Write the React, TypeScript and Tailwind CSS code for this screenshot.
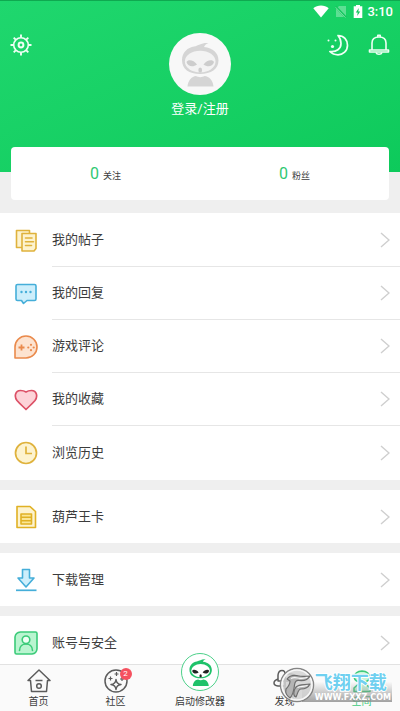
import type { ReactNode } from "react";

type MenuItem = {
  label: string;
  icon: ReactNode;
};

const groups: MenuItem[][] = [
  [
    { label: "我的帖子", icon: <PostsIcon /> },
    { label: "我的回复", icon: <ReplyIcon /> },
    { label: "游戏评论", icon: <GameIcon /> },
    { label: "我的收藏", icon: <HeartIcon /> },
    { label: "浏览历史", icon: <ClockIcon /> },
  ],
  [{ label: "葫芦王卡", icon: <CardIcon /> }],
  [{ label: "下载管理", icon: <DownloadIcon /> }],
  [{ label: "账号与安全", icon: <AccountIcon /> }],
];

const stats = [
  { label: "关注", value: 0 },
  { label: "粉丝", value: 0 },
];

export default function App() {
  return (
    <div className="flex h-dvh flex-col bg-[#efefef] font-['Roboto','Noto_Sans_CJK_SC',sans-serif] text-[#3c3c3c]">
      <main className="min-h-0 flex-1 overflow-y-auto [scrollbar-width:none]">
        <Header />

        <section className="relative mx-[11px] -mt-[25px] mb-[13px] grid h-[53px] grid-cols-2 items-center rounded-sm bg-white pt-0.5">
          {stats.map((stat) => (
            <a key={stat.label} href="#" className="flex items-baseline justify-center gap-1">
              <span className="text-base leading-5 text-[#2fc873]">{stat.value}</span>
              <span className="text-[9px] leading-5">{stat.label}</span>
            </a>
          ))}
        </section>

        <div className="flex flex-col gap-2.5">
          {groups.map((items) => (
            <ul key={items[0].label} className={items.length > 1 ? "bg-white py-px" : "bg-white"}>
              {items.map((item, i) => (
                <li key={item.label}>
                  <a href="#" className="flex h-[53px] items-stretch gap-3.5 pl-3.5">
                    <span className="flex items-center">{item.icon}</span>
                    <span
                      className={
                        i < items.length - 1
                          ? "flex flex-1 items-center justify-between border-b border-[#e6e6e6] pr-2.5"
                          : "flex flex-1 items-center justify-between pr-2.5"
                      }
                    >
                      <span className="text-[13px] leading-5">{item.label}</span>
                      <svg viewBox="0 0 10 16" className="h-4 w-2.5" fill="none" stroke="#cfcfcf" strokeWidth="1.4">
                        <path d="M1 1l8 7-8 7" />
                      </svg>
                    </span>
                  </a>
                </li>
              ))}
            </ul>
          ))}
        </div>
      </main>

      <TabBar />
    </div>
  );
}

function Header() {
  return (
    <header className="border-t border-[#0fa950] bg-linear-to-br from-[#1fd76e] to-[#0dca5b] pb-[53px] text-white">
      <div className="flex h-[21px] items-center justify-end gap-1.5 pr-[7px]">
        <svg viewBox="0 0 16 13" className="h-[13px] w-4" fill="#fff">
          <path d="M8 12.6L.3 3.2C4.500-.3 11.500-.3 15.700 3.200Z" />
        </svg>
        <svg viewBox="0 0 12 13" className="h-[13px] w-3">
          <path d="M4 1h7v11H1V4Z" fill="#fff" opacity=".3" />
          <path d="M.5 1.500l10.500 11" stroke="#13c75d" strokeWidth="2.200" />
          <path d="M.5 2.200l10 10.500" stroke="#fff" opacity=".4" />
        </svg>
        <div className="flex items-center gap-1">
          <svg viewBox="0 0 10 13" className="h-[13px] w-2.5">
            <path d="M3 0h4v1.300h2.300v11.700H.7V1.300H3Z" fill="#fff" />
            <path d="M5.800 3L2.800 7.500h1.900L4.200 11l3-4.500H5.300Z" fill="#13c75d" />
          </svg>
          <span className="text-[13px] leading-5 font-medium">3:10</span>
        </div>
      </div>

      <div className="grid grid-cols-[1fr_auto_1fr] items-start px-2.5 pt-[11px]">
        <button aria-label="设置" className="mt-px justify-self-start">
          <svg viewBox="0 0 22 22" className="size-[22px]" fill="none" stroke="#effff5" strokeWidth="1.600">
            <circle cx="11" cy="11" r="7.300" />
            <circle cx="11" cy="11" r="2.400" strokeWidth="2" />
            <path d="M11 .5v3M11 18.500v3M.5 11h3M18.500 11h3M3.700 3.700l2 2M16.300 16.300l2 2M3.700 18.300l2-2M16.300 5.700l2-2" strokeWidth="1.900" />
          </svg>
        </button>

        <button className="flex flex-col items-center gap-1">
          <span className="flex size-[62px] items-center justify-center rounded-full bg-[#f8f8f8]">
            <Mascot className="h-[47px] w-11" body="#d5d5d5" face="#f3f3f3" eyes="#cdcdcd" />
          </span>
          <span className="text-[13px] leading-5">登录/注册</span>
        </button>

        <div className="mt-px flex gap-[19px] justify-self-end">
          <button aria-label="夜间模式">
            <svg viewBox="0 0 22 22" className="size-[22px]" fill="none" stroke="#effff5" strokeWidth="1.700" strokeLinejoin="round">
              <path d="M11 1.500C17 1.500 20.500 6 20.500 11.200C20.500 17 16 20.800 11 20.800C8 20.800 5 19.800 2.800 17.500C9.500 18.500 14 14.500 14 9.500C14 6.500 13 3.800 11 1.500Z" />
              <g fill="#effff5" stroke="none">
                <circle cx="1.500" cy="6.500" r="1" />
                <circle cx="8.500" cy="6.500" r="1" />
                <circle cx="5.500" cy="12.500" r="1.600" />
              </g>
            </svg>
          </button>
          <button aria-label="消息">
            <svg viewBox="0 0 22 22" className="size-[22px]" fill="none" stroke="#effff5" strokeWidth="1.600" strokeLinejoin="round">
              <path d="M4 16V9C4 5 6.500 3 11 3s7 2 7 6v7" />
              <path d="M1.500 16h19v2h-19Z" />
              <path d="M8 18.500c.8 2.300 5.200 2.300 6 0M9.800 3V1.300h2.400V3" />
            </svg>
          </button>
        </div>
      </div>
    </header>
  );
}

function TabBar() {
  return (
    <nav className="relative flex h-[47px] border-t border-[#e2e2e2] bg-[#fafafa] text-[10px] leading-[18px]">
      <a href="#" className="flex flex-1 flex-col items-center pt-1">
        <HomeIcon />
        首页
      </a>
      <a href="#" className="flex flex-1 flex-col items-center pt-1">
        <span className="relative">
          <CommunityIcon />
          <span className="absolute -top-px -right-1 flex size-3 items-center justify-center rounded-full bg-[#f5515f] text-[8px] text-white">
            2
          </span>
        </span>
        社区
      </a>
      <a href="#" className="-mt-3 flex w-[92px] flex-col items-center gap-0.5">
        <span className="flex size-[38px] shrink-0 items-center justify-center rounded-full border border-[#4dd18a] bg-white">
          <Mascot className="h-[29px] w-[27px]" body="#1fc26a" face="#fff" eyes="#222" />
        </span>
        启动修改器
      </a>
      <a href="#" className="flex flex-1 flex-col items-center pt-1">
        <DiscoverIcon />
        发现
      </a>
      <a href="#" className="flex flex-1 flex-col items-center pt-1 text-[#3fcb7d]">
        <SpaceIcon />
        空间
      </a>
      <Watermark />
    </nav>
  );
}

function Watermark() {
  return (
    <div className="pointer-events-none absolute top-0.5 right-2 flex items-start font-['DejaVu_Sans','Noto_Sans_CJK_SC',sans-serif] font-bold">
      <svg viewBox="0 0 36 36" className="relative z-10 -mr-[13px] size-9">
        <circle cx="18" cy="18" r="16.500" fill="#d2d2d2" fillOpacity=".85" stroke="#858585" strokeWidth="1.500" />
        <circle cx="18" cy="18" r="15" fill="none" stroke="#f8f8f8" strokeWidth="1.500" />
        <g fill="#b4b4b4" stroke="#6e6e6e" strokeWidth="1.200" strokeLinejoin="round">
          <path d="M8 12C11 8 16 8 20 9C24 10 27 9 31 9C29 13 25 14 20 13.500C17 13 16 15 15.500 18C15 23 14 28 11 31C8 29 6 26 7 22C9 20 11 17 11 14Z" />
          <path d="M17 20C20 17 24 18 31 17C29 21 26 22 22 22C19 22 19 26 17 30C14 29 14 24 17 20Z" />
        </g>
        <path d="M12 11.500C15 9.800 18 11 21 11.300S27 11 28.500 10.300M18.500 20.500C22 18.800 25 20 28.500 18.500" fill="none" stroke="#f6f6f6" strokeWidth="1.200" />
      </svg>
      <div className="mt-1.5 flex flex-col bg-linear-to-b from-transparent from-30% to-[#8c8c8c]/80">
        <span className="pl-[13px] text-lg leading-5 text-[#6fd0f0] [-webkit-text-stroke:2px_#fff] [paint-order:stroke]">
          飞翔下载
        </span>
        <span className="pr-px pl-[13px] text-[8px] leading-[9px] text-white">WWW.FXXZ.COM</span>
      </div>
    </div>
  );
}

function Mascot({ className, body, face, eyes }: { className: string; body: string; face: string; eyes: string }) {
  return (
    <svg viewBox="13 10 44 47" className={className}>
      <path
        d="M17 29C17 21 23 16.500 29 15.500C34 14.500 36 11.500 43.500 12C41 13 39.500 14.500 39 16C48 17 53.500 22 53.500 29.500C53.500 38 46 43 35 43C24 43 17 38 17 29Z"
        fill={body}
      />
      <ellipse cx="35.200" cy="30.500" rx="15.300" ry="10.800" fill={face} />
      <g fill={eyes}>
        <path d="M21.500 31C23 27.800 29 29 32 33.500C28 36.500 23 35.800 21.500 31Z" />
        <path d="M49 31C47.500 27.800 41.500 29 38.500 33.500C42.500 36.500 47.500 35.800 49 31Z" />
        <ellipse cx="35.200" cy="39" rx="1.900" ry="2.600" />
      </g>
      <path d="M22.500 55.500C23 49 27 45.500 31 45C33 46.500 37.500 46.500 39.500 45C44 45.500 48 49 48.500 55.500Z" fill={body} />
    </svg>
  );
}

function PostsIcon() {
  return (
    <svg viewBox="0 0 24 24" className="size-6" fill="#fdf3cf" stroke="#dfb23c" strokeWidth="1.600" strokeLinejoin="round">
      <path d="M2.500 1.500h13v17h-13Z" />
      <path d="M8 4.500h14v15l-2 2.500H8Z" />
      <path d="M11.500 9h6.500M11.500 12.800h8M11.500 16.500h6" strokeLinecap="round" />
    </svg>
  );
}

function ReplyIcon() {
  return (
    <svg viewBox="0 0 24 24" className="size-6" fill="#cdeefb" stroke="#45aed9" strokeWidth="1.600" strokeLinejoin="round">
      <path d="M3.500 2.500h17Q22 2.500 22 4v13q0 1.500-1.500 1.500H13L9.500 21.500 7.500 18.500H3.500Q2 18.500 2 17V4q0-1.500 1.500-1.500Z" />
      <g fill="#45aed9" stroke="none">
        <circle cx="7.500" cy="10" r="1.200" />
        <circle cx="12" cy="10" r="1.200" />
        <circle cx="16.500" cy="10" r="1.200" />
      </g>
    </svg>
  );
}

function GameIcon() {
  return (
    <svg viewBox="0 0 24 24" className="size-6" fill="#fde3d0" stroke="#ea8a4c" strokeWidth="1.600" strokeLinejoin="round">
      <path d="M1 23V12A11 11 0 1 1 12 23Z" />
      <path d="M7.500 9.500v6M4.500 12.500h6" strokeWidth="1.800" />
      <g fill="#ea8a4c" stroke="none">
        <circle cx="17" cy="9.800" r="1.100" />
        <circle cx="17" cy="15.200" r="1.100" />
        <circle cx="14.300" cy="12.500" r="1.100" />
        <circle cx="19.700" cy="12.500" r="1.100" />
      </g>
    </svg>
  );
}

function HeartIcon() {
  return (
    <svg viewBox="0 0 24 24" className="size-6" fill="#fdd3d8" stroke="#dc5066" strokeWidth="1.700" strokeLinejoin="round">
      <path d="M12 21.500C9 18.500 5.500 15.500 3 12.500C0 8.500 1.200 2.500 6.500 2.500C9.500 2.500 10.500 3 12 4C13.500 3 14.500 2.500 17.500 2.500C22.800 2.500 24 8.500 21 12.500C18.500 15.500 15 18.500 12 21.500Z" />
    </svg>
  );
}

function ClockIcon() {
  return (
    <svg viewBox="0 0 24 24" className="size-6" fill="#fdf3cf" stroke="#dfb23c" strokeWidth="1.700">
      <circle cx="12" cy="12" r="10.500" />
      <path d="M12 5.500v7h6" fill="none" strokeWidth="1.700" />
    </svg>
  );
}

function CardIcon() {
  return (
    <svg viewBox="0 0 24 24" className="size-6" fill="#fdf3cf" stroke="#e0b124" strokeWidth="1.600" strokeLinejoin="round">
      <path d="M3 1.500h13l5.500 5V22.500H3Z" />
      <path d="M7 9h10.500v10H7ZM7 12.300h10.500M7 15.700h10.500" fill="#fbe694" />
    </svg>
  );
}

function DownloadIcon() {
  return (
    <svg viewBox="0 0 24 24" className="size-6" fill="#cdeefb" stroke="#45aed9" strokeWidth="1.600" strokeLinejoin="round">
      <path d="M8.500 1.500h7v8.500h4.500l-8 9-8-9h4.500Z" />
      <path d="M2 22.300h20.500" strokeWidth="1.700" />
    </svg>
  );
}

function AccountIcon() {
  return (
    <svg viewBox="0 0 24 24" className="size-6" stroke="#3bcb79" strokeWidth="1.600" strokeLinejoin="round" strokeLinecap="round">
      <path d="M6.500 1H21.500Q23 1 23 2.500V18q-.5 4.500-5 5H2.500Q1 23 1 21.500V6Q1.500 1.500 6.500 1Z" fill="#b9f5d0" />
      <circle cx="12" cy="8.800" r="3.800" fill="#effff5" />
      <path d="M5.500 19.500C5.500 10.800 18.500 10.800 18.500 19.500" fill="none" />
    </svg>
  );
}

function HomeIcon() {
  return (
    <svg viewBox="0 0 24 24" className="size-6 shrink-0" fill="none" stroke="#5c5c5c" strokeWidth="1.500" strokeLinejoin="round">
      <path d="M1 11.500L12 1l11 10.500H20.500L19.500 22.500h-15L3.500 11.500Z" />
      <path d="M8.500 11.500h7" />
      <circle cx="12" cy="17" r="2.300" />
    </svg>
  );
}

function CommunityIcon() {
  return (
    <svg viewBox="0 0 24 24" className="size-6 shrink-0" fill="none" stroke="#5c5c5c" strokeWidth="1.500">
      <circle cx="12" cy="12" r="11" />
      <path d="M12 10.500Q12.500 15 17 15.500Q12.500 16 12 20.500Q11.500 16 7 15.500Q11.500 15 12 10.500Z" strokeLinejoin="round" />
      <path d="M6.500 7.500v4M4.500 9.500h4M12.500 3v4M10.500 5h4M18 8v4M16 10h4" strokeWidth="1.200" />
    </svg>
  );
}

function DiscoverIcon() {
  return (
    <svg viewBox="0 0 24 24" className="size-6 shrink-0" fill="none" stroke="#5c5c5c" strokeWidth="1.500" strokeLinejoin="round">
      <path d="M12 12H5V6Q5.500 1.500 9 1.500T12 6Z" />
      <path d="M12 12V5h6Q22.500 5.500 22.500 9T18 12Z" />
      <path d="M12 12h7v6Q18.500 22.500 15 22.500T12 18Z" />
      <path d="M12 12v5H5Q1 16.500 1 14T5 10" />
    </svg>
  );
}

function SpaceIcon() {
  return (
    <svg viewBox="0 0 24 24" className="size-6 shrink-0" fill="#c9f5da" stroke="#3fcb7d" strokeWidth="1.500" strokeLinejoin="round">
      <path d="M4 8Q5 2.500 12 2Q19 2.500 20 8Q19 13 12 13.500Q5 13 4 8Z" />
      <path d="M9.500 14L4 19v3.500h16V19l-5.500-5Z" />
    </svg>
  );
}
